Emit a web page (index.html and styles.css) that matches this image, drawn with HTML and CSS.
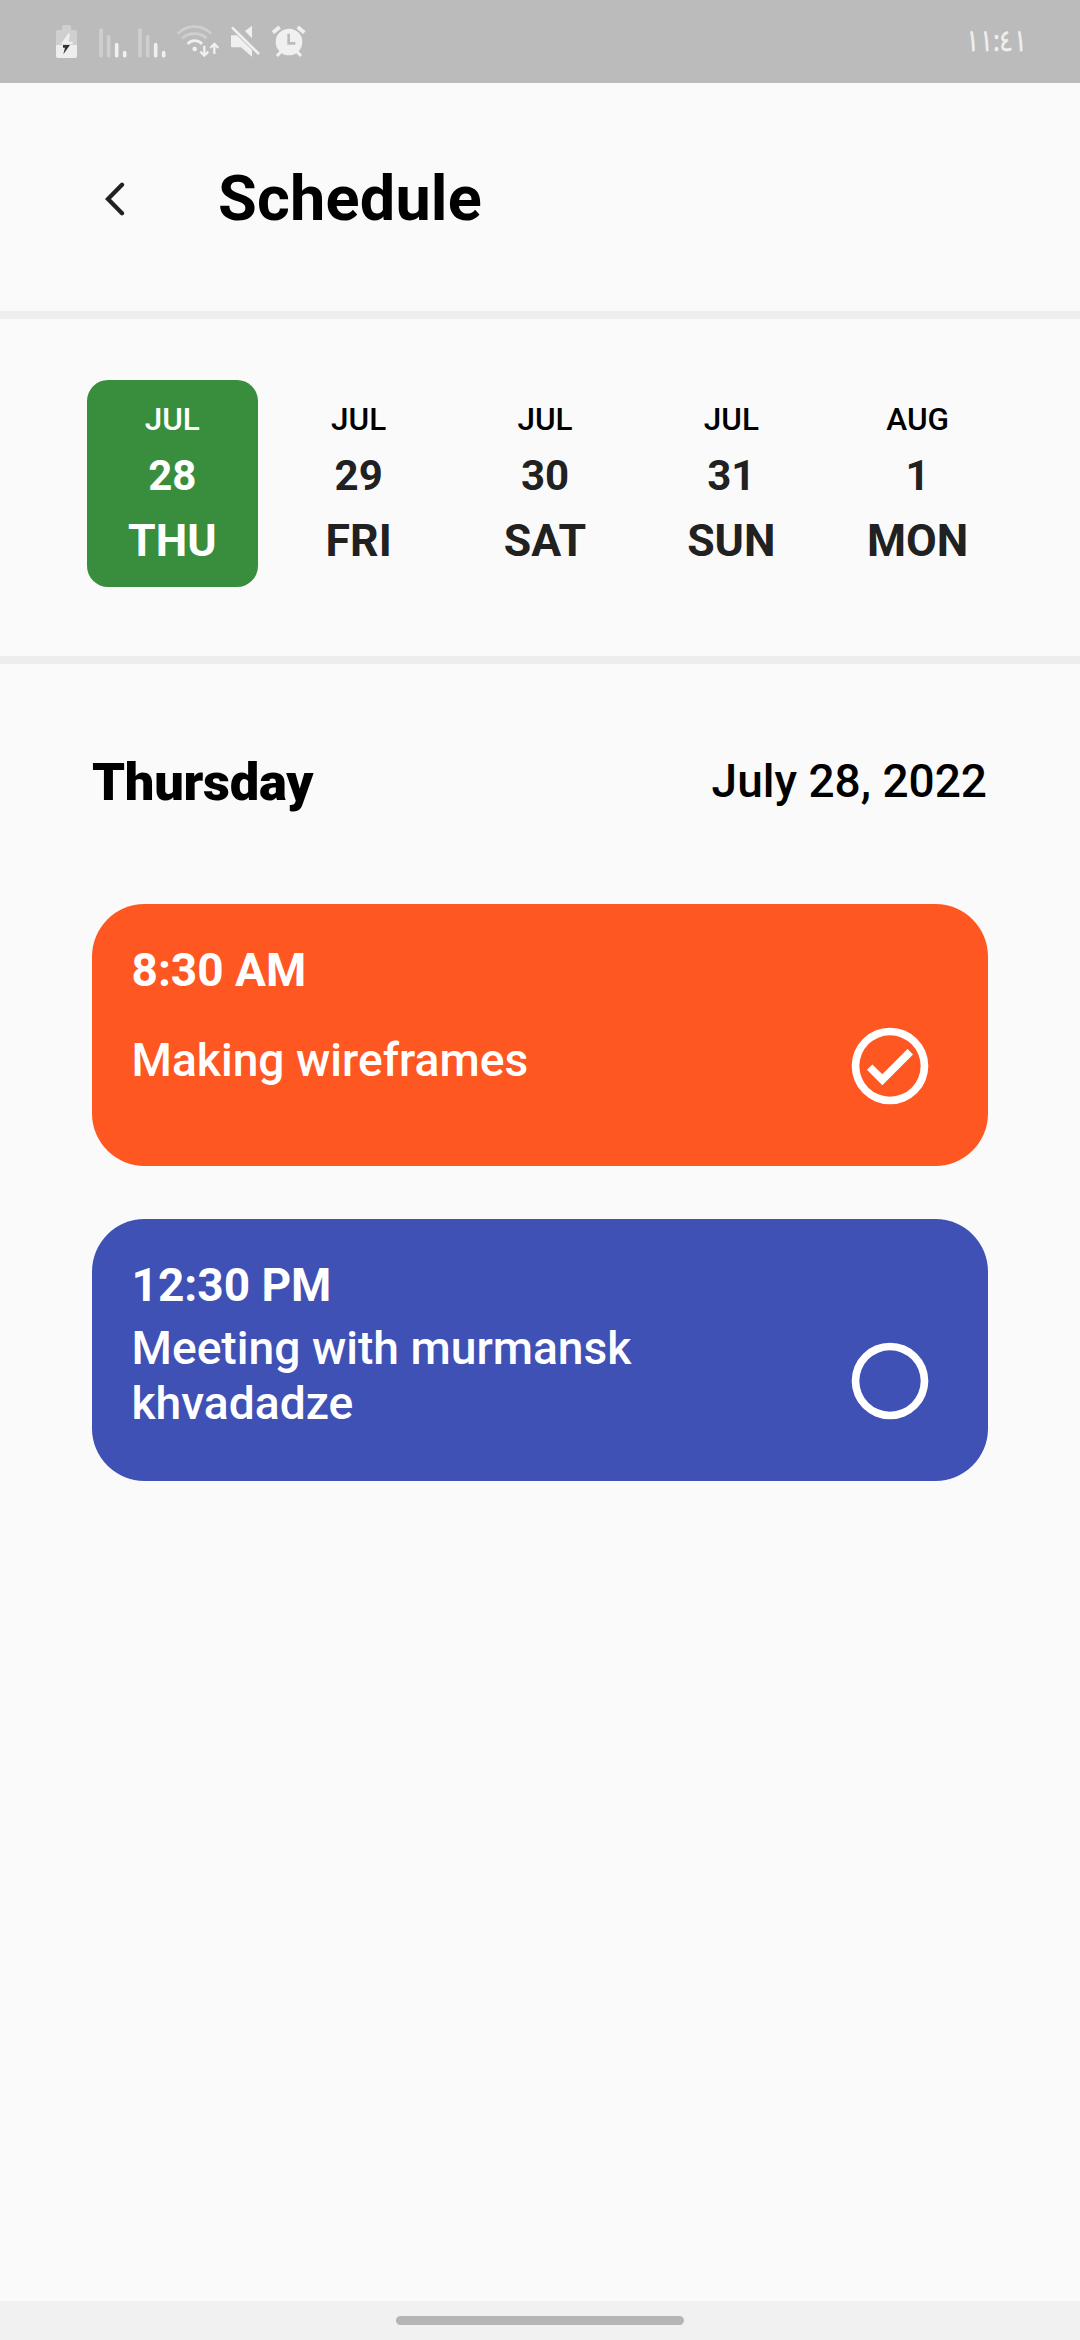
FILE: index.html
```html
<!DOCTYPE html>
<html lang="en">
<head>
<meta charset="utf-8">
<title>Schedule</title>
<link rel="stylesheet" href="styles.css">
</head>
<body>
<div class="status-bar">
  <div class="status-icons">
    <svg class="icon-battery" width="21" height="34" viewBox="0 0 63 102">
      <path fill="#cfcfcf" d="M18 6q0-6 6-6h15q6 0 6 6v9h12q6 0 6 6v39H0V21q0-6 6-6h12z"/>
      <path fill="#eee" d="M0 60h63v33q0 6-6 6H6q-6 0-6-6z"/>
      <path fill="#eee" d="M37 25L14 58h35l2-8H38l4-25z"/>
      <path fill="#333" d="M21 60h21L22 88l5-20h-6z"/>
    </svg>
    <svg class="icon-signal" width="28" height="32" viewBox="0 0 84 96" fill="none" stroke-width="11" stroke-linecap="round">
      <path stroke="#cfcfcf" d="M6 9v77M29 29v57"/>
      <path stroke="#f0f0f0" d="M53 53v33M77 77v9"/>
    </svg>
    <svg class="icon-signal" width="28" height="32" viewBox="0 0 84 96" fill="none" stroke-width="11" stroke-linecap="round">
      <path stroke="#cfcfcf" d="M6 9v77M29 29v57"/>
      <path stroke="#f0f0f0" d="M53 53v33M77 77v9"/>
    </svg>
    <svg class="icon-wifi" width="42" height="32" viewBox="0 0 126 96" fill="none" stroke-width="8">
      <path stroke="#cfcfcf" d="M3 26Q22 5 52 5t50 21M16 40Q30 26 52 26t37 14"/>
      <path stroke="#f0f0f0" d="M32 57q8-10 21-10t22 10"/>
      <circle cx="53" cy="72" r="7" fill="#f0f0f0"/>
      <path stroke="#f0f0f0" stroke-width="7" d="M82 62v29M70 80l12 12 12-12M112 87V57M100 69l12-12 12 12"/>
    </svg>
    <svg class="icon-mute" width="30" height="33" viewBox="0 0 90 99">
      <path fill="#f0f0f0" d="M42 18L63 2v38zM0 31h18l45 44v20L30 67H4q-4 0-4-4z"/>
      <path stroke="#bbb" stroke-width="6" d="M10-3l85 87"/>
      <path stroke="#f0f0f0" stroke-width="8" d="M3 7l81 80"/>
    </svg>
    <svg class="icon-alarm" width="34" height="33" viewBox="0 0 102 99" fill="none" stroke="#f0f0f0">
      <path stroke-width="11" d="M3 23L23 6M97 23L77 6"/>
      <path stroke-width="9" d="M15 93l14-15M87 93L73 78"/>
      <circle cx="51" cy="51" r="40" fill="#f0f0f0" stroke="none"/>
      <path stroke="#bbb" stroke-width="8" d="M50 26v29h20"/>
    </svg>
  </div>
  <span class="status-time">١١:٤١</span>
</div>

<header class="header">
  <svg class="icon-back" width="20" height="34" viewBox="0 0 20 34" fill="none" stroke="#212121" stroke-width="4.3" stroke-linecap="round">
    <path d="M17 2.8L3 17l14 14.2"/>
  </svg>
  <h1 class="title">Schedule</h1>
</header>

<nav class="days">
  <div class="day day-selected"><span class="month">JUL</span><span class="date">28</span><span class="weekday">THU</span></div>
  <div class="day"><span class="month">JUL</span><span class="date">29</span><span class="weekday">FRI</span></div>
  <div class="day"><span class="month">JUL</span><span class="date">30</span><span class="weekday">SAT</span></div>
  <div class="day"><span class="month">JUL</span><span class="date">31</span><span class="weekday">SUN</span></div>
  <div class="day"><span class="month">AUG</span><span class="date">1</span><span class="weekday">MON</span></div>
</nav>

<main class="agenda">
  <div class="agenda-head">
    <h2 class="agenda-day">Thursday</h2>
    <span class="agenda-date">July 28, 2022</span>
  </div>
  <div class="task task-orange">
    <div class="task-text">
      <div class="task-time">8:30 AM</div>
      <div class="task-name">Making wireframes</div>
    </div>
    <svg class="task-check" viewBox="0 0 24 24" fill="#fff">
      <path d="M12 2a10 10 0 1 0 0 20 10 10 0 0 0 0-20zm0 18a8 8 0 1 1 0-16 8 8 0 0 1 0 16zm4.59-12.42L10 14.17l-2.59-2.58L6 13l4 4 8-8z"/>
    </svg>
  </div>
  <div class="task task-indigo">
    <div class="task-text">
      <div class="task-time">12:30 PM</div>
      <div class="task-name">Meeting with murmansk khvadadze</div>
    </div>
    <svg class="task-check" viewBox="0 0 24 24" fill="#fff">
      <path d="M12 2a10 10 0 1 0 0 20 10 10 0 0 0 0-20zm0 18a8 8 0 1 1 0-16 8 8 0 0 1 0 16z"/>
    </svg>
  </div>
</main>

<footer class="gesture-bar"><div class="gesture-pill"></div></footer>
</body>
</html>
```

FILE: styles.css
```css
* { box-sizing: border-box; margin: 0; }

body {
  width: 1080px;
  height: 2340px;
  display: flex;
  flex-direction: column;
  background: #fafafa;
  color: #000;
  font-family: Roboto, "Liberation Sans", sans-serif;
  overflow: hidden;
}

svg { display: block; flex: none; }

.status-bar {
  height: 83px;
  flex: none;
  display: flex;
  justify-content: space-between;
  align-items: flex-start;
  padding: 25px 53px 0 56px;
  background: #bbb;
}
.status-icons { display: flex; }
.icon-signal { margin-top: 2px; }
.icon-battery + .icon-signal { margin-left: 22px; }
.icon-signal + .icon-signal { margin-left: 11px; }
.icon-wifi { margin-left: 11px; }
.icon-mute { margin-left: 12px; }
.icon-alarm { margin-left: 11px; }
.status-time {
  margin-top: 1px;
  font: 29px/32px "Noto Sans Arabic", "DejaVu Sans", sans-serif;
  color: #f0f0f0;
  -webkit-text-stroke: 0.5px #f0f0f0;
  transform: scaleX(0.83);
  transform-origin: right;
}

.header {
  height: 236px;
  flex: none;
  display: flex;
  align-items: flex-start;
  padding: 79px 0 0 105px;
  border-bottom: 8px solid #ededed;
}
.icon-back { margin-top: 20px; }
.title {
  margin-left: 93px;
  font-size: 63px;
  line-height: 74px;
  font-weight: 700;
  letter-spacing: 0.2px;
}

.days {
  height: 345px;
  flex: none;
  display: flex;
  gap: 15.75px;
  padding: 60.6px 0 0 87px;
  border-bottom: 8px solid #ededed;
}
.day {
  width: 170.6px;
  height: 207.8px;
  display: flex;
  flex-direction: column;
  align-items: center;
  padding-top: 21.4px;
  border-radius: 21px;
  color: #212121;
}
.month { font-size: 31.5px; line-height: 37px; font-weight: 500; color: #000; }
.date { margin-top: 13px; font-size: 42px; line-height: 49px; font-weight: 700; }
.weekday { margin-top: 15px; font-size: 44.6px; line-height: 53px; font-weight: 700; }
.day-selected { background: #388e3c; }
.day-selected, .day-selected .month { color: #fff; }

.agenda {
  flex: 1;
  display: flex;
  flex-direction: column;
  gap: 52.6px;
  padding: 87px 92px 0;
}
.agenda-head {
  height: 100.4px;
  display: flex;
  justify-content: space-between;
}
.agenda-day { font-size: 52.5px; line-height: 62px; font-weight: 900; letter-spacing: -0.3px; }
.agenda-date { padding-right: 1px; font-size: 46px; line-height: 61px; font-weight: 500; }

.task {
  height: 262.4px;
  flex: none;
  display: flex;
  justify-content: space-between;
  border-radius: 52.5px;
  padding: 38px 52.5px 0 39.5px;
  color: #fff;
}
.task-orange { background: #ff5722; }
.task-indigo { background: #3f51b5; }
.task-time { font-size: 46px; line-height: 56px; font-weight: 700; }
.task-text { width: 560px; }
.task-name {
  height: 126px;
  display: flex;
  align-items: center;
  font-size: 46.2px;
  line-height: 55px;
  font-weight: 500;
}
.task-check { width: 92px; height: 92px; margin-top: 78px; }

.gesture-bar {
  height: 39px;
  flex: none;
  display: flex;
  justify-content: center;
  padding-top: 15px;
  background: #f1f1f1;
}
.gesture-pill { width: 288px; height: 9px; border-radius: 5px; background: #b5b5b5; }
```
